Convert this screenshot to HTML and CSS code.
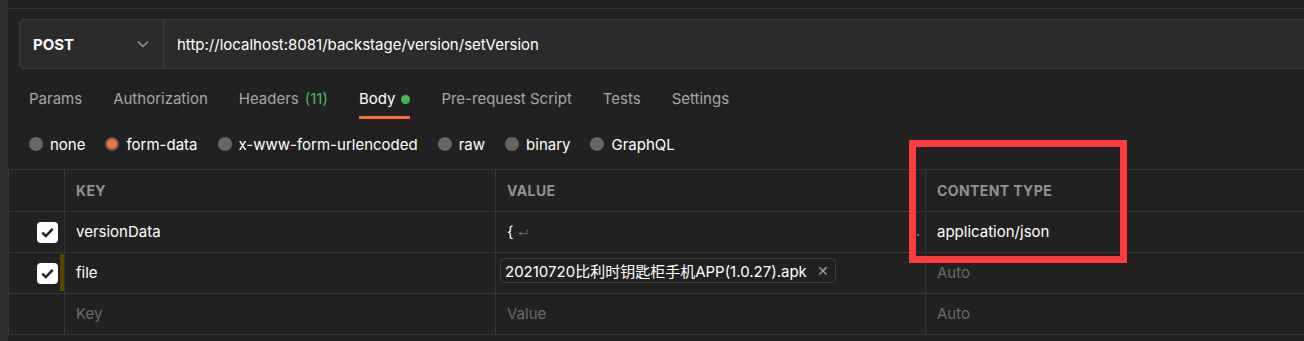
FILE: index.html
```html
<!DOCTYPE html>
<html lang="en">
<head>
<meta charset="utf-8">
<title>Postman request</title>
<link rel="stylesheet" href="styles.css">
</head>
<body>
<div class="app">
  <div class="edge"></div>
  <div class="main">
    <div class="topline"></div>
    <div class="req">
      <div class="method">
        <span class="method-name">POST</span>
        <svg class="chev" width="12" height="8" viewBox="0 0 12 8"><path d="M1 1.5 L6 6.5 L11 1.5" fill="none" stroke="#9a9a9a" stroke-width="1.3"/></svg>
      </div>
      <div class="url">http://localhost:8081/backstage/version/setVersion</div>
    </div>
    <div class="tabs">
      <span class="tab">Params</span>
      <span class="tab">Authorization</span>
      <span class="tab">Headers <span class="count">(11)</span></span>
      <span class="tab active">Body <span class="dot"></span></span>
      <span class="tab">Pre-request Script</span>
      <span class="tab">Tests</span>
      <span class="tab">Settings</span>
    </div>
    <div class="radios">
      <span class="radio"><span class="circle"></span>none</span>
      <span class="radio"><span class="circle on"></span>form-data</span>
      <span class="radio"><span class="circle"></span>x-www-form-urlencoded</span>
      <span class="radio"><span class="circle"></span>raw</span>
      <span class="radio"><span class="circle"></span>binary</span>
      <span class="radio"><span class="circle"></span>GraphQL</span>
    </div>
    <div class="table">
      <div class="cell head c1"></div>
      <div class="cell head">KEY</div>
      <div class="cell head">VALUE</div>
      <div class="cell head c4">CONTENT TYPE</div>

      <div class="cell c1"><span class="check"><svg width="13" height="11" viewBox="0 0 13 11"><path d="M1.3 5.6 L4.8 9 L11.7 1.8" fill="none" stroke="#1e1e1e" stroke-width="2.4"/></svg></span><span class="handle"></span></div>
      <div class="cell">versionData</div>
      <div class="cell val"><span>{ <span class="ret">↵</span></span><span class="tiny"></span></div>
      <div class="cell c4">application/json</div>

      <div class="cell c1"><span class="check"><svg width="13" height="11" viewBox="0 0 13 11"><path d="M1.3 5.6 L4.8 9 L11.7 1.8" fill="none" stroke="#1e1e1e" stroke-width="2.4"/></svg></span><span class="handle drag"></span></div>
      <div class="cell">file</div>
      <div class="cell filecell"><span class="chip">20210720比利时钥匙柜手机APP(1.0.27).apk<span class="x">✕</span></span></div>
      <div class="cell c4 ph">Auto</div>

      <div class="cell c1"></div>
      <div class="cell ph">Key</div>
      <div class="cell ph">Value</div>
      <div class="cell c4 ph">Auto</div>
    </div>
  </div>
  <div class="mark"></div>
</div>
</body>
</html>
```

FILE: styles.css
```css
* { box-sizing: border-box; }
html, body { margin: 0; padding: 0; }
body {
  background: #212121;
  font-family: Inter, "Noto Sans CJK SC", sans-serif;
  font-size: 15px;
  color: #ffffff;
  width: 1304px;
  height: 341px;
  overflow: hidden;
}
.app { display: flex; height: 341px; position: relative; }
.edge { width: 8px; background: #2c2c2c; flex: none; }
.main { flex: 1; min-width: 0; }
.topline { height: 9px; border-bottom: 1px solid #343434; }
.req {
  margin: 10px -10px 0 11px;
  height: 50px;
  display: flex;
  background: #2b2b2b;
  border: 1px solid #3a3a3a;
  border-radius: 5px;
}
.method {
  width: 144px;
  border-right: 1px solid #3a3a3a;
  display: flex;
  align-items: center;
  justify-content: space-between;
  padding: 0 14px 0 13px;
}
.method-name { font-weight: 700; font-size: 15px; }
.url { display: flex; align-items: center; padding-left: 13px; }
.tabs { display: flex; gap: 31px; padding-left: 21px; margin-top: 12px; }
.tab {
  color: #a6a6a6;
  line-height: 20px;
  padding: 8px 0 7px;
  border-bottom: 3px solid transparent;
  display: flex;
  align-items: center;
  gap: 6px;
}
.tab.active { color: #ffffff; border-bottom-color: #ff6c37; }
.count { color: #49b869; }
.dot { width: 9px; height: 9px; border-radius: 50%; background: #3fb950; display: inline-block; }
.radios { display: flex; height: 50px; align-items: center; padding-left: 21px; gap: 20px; }
.radio { display: flex; align-items: center; gap: 7px; }
.circle { width: 14px; height: 14px; border-radius: 50%; background: #666666; display: inline-block; }
.circle.on { background: #ff6c37; border: 2px solid #5c5c5c; }
.table {
  display: grid;
  grid-template-columns: 56px 431px 430px 1fr;
  grid-template-rows: 42px 41px 41px 41px;
  border-top: 1px solid #363636;
  border-left: 1px solid #363636;
}
.cell {
  border-right: 1px solid #363636;
  border-bottom: 1px solid #363636;
  display: flex;
  align-items: center;
  padding-left: 11px;
  padding-bottom: 2px;
}
.cell.c4 { border-right: none; }
.head { color: #929292; font-weight: 700; font-size: 14px; letter-spacing: 0.4px; padding-bottom: 0; }
.c1 { padding-left: 0; padding-bottom: 0; justify-content: flex-end; }
.check {
  width: 21px; height: 21px;
  background: #ffffff;
  border-radius: 4px;
  display: flex; align-items: center; justify-content: center;
  margin-right: 2px;
}
.handle { width: 4px; align-self: stretch; margin: 1px 0 2px; }
.handle.drag { background: #5a4200; }
.val { justify-content: space-between; padding-right: 6px; }
.ret { color: #6b6b6b; font-size: 11px; }
.tiny { width: 2px; height: 2px; background: #777; margin-top: 8px; }
.filecell { padding-left: 4px; align-items: flex-start; padding-top: 5px; }
.chip {
  height: 25px;
  border: 1px solid #3c3c3c;
  border-radius: 4px;
  display: flex; align-items: center;
  padding: 0 6px 0 4px;
  gap: 10px;
}
.x { color: #a0a0a0; font-size: 14px; }
.ph { color: #6b6b6b; }
.mark {
  position: absolute;
  left: 909px; top: 140px;
  width: 218px; height: 123px;
  border: 7px solid #ff3b3b;
}
```
